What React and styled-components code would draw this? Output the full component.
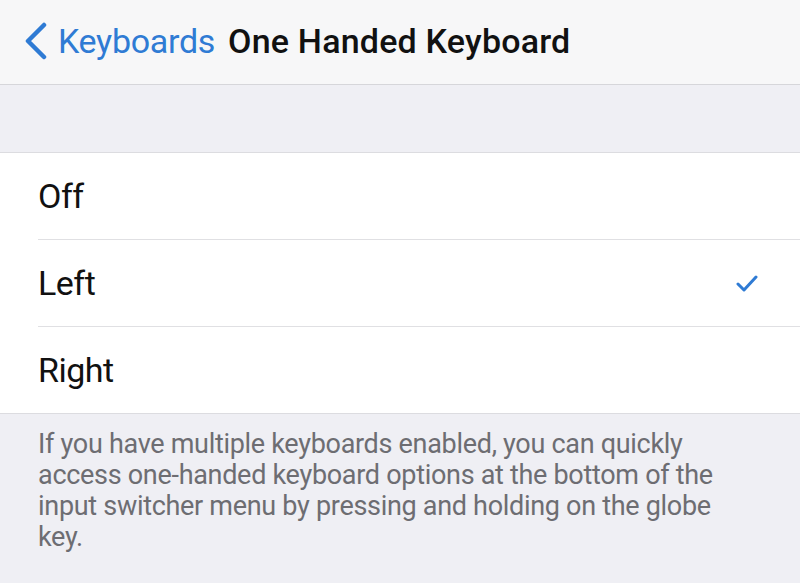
import styled, { createGlobalStyle } from "styled-components";

const GlobalStyle = createGlobalStyle`
  html, body {
    margin: 0;
    padding: 0;
    background: #efeff4;
  }
  body {
    font-family: Roboto, "Liberation Sans", sans-serif;
    -webkit-font-smoothing: antialiased;
  }
`;

const Screen = styled.div`
  width: 800px;
  height: 583px;
  overflow: hidden;
  background: #efeff4;
  display: flex;
  flex-direction: column;
`;

const NavBar = styled.div`
  height: 85px;
  flex-shrink: 0;
  display: flex;
  align-items: center;
  padding: 0 0 2px 22px;
  box-sizing: border-box;
  background: #f7f7f8;
  border-bottom: 1px solid #d6d6da;
`;

const BackButton = styled.div`
  display: flex;
  align-items: center;
  gap: 10px;
  color: #2f7bd4;
  font-size: 34px;
  letter-spacing: -0.3px;
`;

const Title = styled.div`
  margin-left: 13px;
  color: #111;
  font-size: 34px;
  font-weight: 500;
  letter-spacing: 0.2px;
`;

const Spacer = styled.div`
  height: 67px;
  flex-shrink: 0;
  border-bottom: 1px solid #dcdce0;
`;

const List = styled.div`
  background: #fff;
  padding-left: 38px;
  border-bottom: 1px solid #dcdce0;
`;

const Row = styled.div`
  height: 86px;
  display: flex;
  align-items: center;
  justify-content: space-between;
  padding-right: 42px;
  font-size: 34px;
  color: #111;
  letter-spacing: -0.5px;
  border-bottom: ${({ $last }) => ($last ? "none" : "1px solid #e0e0e3")};
`;

const Footer = styled.p`
  margin: 0;
  padding: 15px 72px 0 38px;
  font-size: 27px;
  line-height: 31px;
  color: #6d6d72;
  letter-spacing: -0.3px;
`;

const Chevron = () => (
  <svg width="26" height="38" viewBox="0 0 26 38">
    <path
      d="M22 3 L6 19 L22 35"
      fill="none"
      stroke="#2f7bd4"
      strokeWidth="4.5"
      strokeLinecap="round"
      strokeLinejoin="round"
    />
  </svg>
);

const Check = () => (
  <svg width="22" height="18" viewBox="0 0 22 18">
    <path
      d="M2 10 L8 16 L20 3"
      fill="none"
      stroke="#2f7bd4"
      strokeWidth="3"
      strokeLinecap="round"
      strokeLinejoin="round"
    />
  </svg>
);

const options = ["Off", "Left", "Right"];

export default function App() {
  const selected = "Left";
  return (
    <>
      <GlobalStyle />
      <Screen>
        <NavBar>
          <BackButton>
            <Chevron />
            Keyboards
          </BackButton>
          <Title>One Handed Keyboard</Title>
        </NavBar>
        <Spacer />
        <List>
          {options.map((opt, i) => (
            <Row key={opt} $last={i === options.length - 1}>
              {opt}
              {opt === selected && <Check />}
            </Row>
          ))}
        </List>
        <Footer>
          If you have multiple keyboards enabled, you can quickly access
          one-handed keyboard options at the bottom of the input switcher menu
          by pressing and holding on the globe key.
        </Footer>
      </Screen>
    </>
  );
}
